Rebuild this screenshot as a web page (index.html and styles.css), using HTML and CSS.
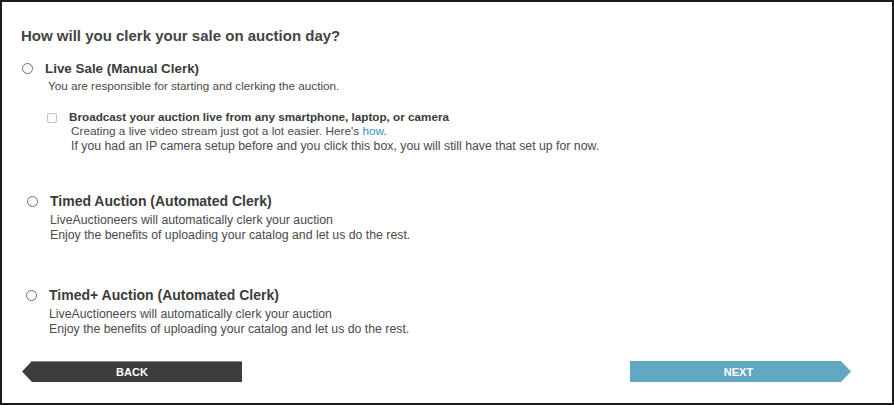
FILE: index.html
```html
<!DOCTYPE html>
<html lang="en">
<head>
  <meta charset="UTF-8" />
  <title>Auction Setup - Clerking</title>
  <meta name="viewport" content="width=device-width, initial-scale=1.0" />
  <link rel="stylesheet" href="styles.css">
</head>
<body>
  <div class="frame">
    <div class="wizard">
      <h1>How will you clerk your sale on auction day?</h1>

      <div class="option">
        <label class="option-title"><input type="radio" name="clerk" value="live"> Live Sale (Manual Clerk)</label>
        <p class="option-desc">You are responsible for starting and clerking the auction.</p>

        <div class="sub-option">
          <label class="sub-title"><input type="checkbox" name="broadcast"> Broadcast your auction live from any smartphone, laptop, or camera</label>
          <p class="sub-desc">
            Creating a live video stream just got a lot easier. Here's <a href="#">how</a>.<br>
            <span class="sub-note">If you had an IP camera setup before and you click this box, you will still have that set up for now.</span>
          </p>
        </div>
      </div>

      <div class="option option-timed">
        <label class="option-title"><input type="radio" name="clerk" value="timed"> Timed Auction (Automated Clerk)</label>
        <p class="option-desc">
          LiveAuctioneers will automatically clerk your auction<br>
          Enjoy the benefits of uploading your catalog and let us do the rest.
        </p>
      </div>

      <div class="option option-timed option-plus">
        <label class="option-title"><input type="radio" name="clerk" value="timedplus"> Timed+ Auction (Automated Clerk)</label>
        <p class="option-desc">
          LiveAuctioneers will automatically clerk your auction<br>
          Enjoy the benefits of uploading your catalog and let us do the rest.
        </p>
      </div>

      <div class="nav">
        <button class="btn btn-back">BACK</button>
        <button class="btn btn-next">NEXT</button>
      </div>
    </div>
  </div>
</body>
</html>
```

FILE: styles.css
```css
body {
  margin: 0;
  padding: 0;
  background: #ffffff;
  font-family: "Liberation Sans", Arial, sans-serif;
  color: #444;
}
.frame {
  width: 890px;
  height: 401px;
  border: 2px solid #1a1a1a;
  overflow: hidden;
}
.wizard {
  padding: 25px 41px 0 20px;
}
h1 {
  font-size: 15px;
  line-height: 18px;
  font-weight: bold;
  color: #444;
  margin: 0 0 15px -1px;
}
.option-title {
  display: flex;
  align-items: center;
  gap: 12px;
  font-size: 13.4px;
  line-height: 17px;
  font-weight: bold;
  color: #3b3b3b;
}
.option-title input {
  appearance: none;
  width: 11px;
  height: 11px;
  margin: 0;
  border: 1px solid #6f6f6f;
  border-radius: 50%;
  background: #fff;
  flex: none;
}
.option-desc {
  margin: 1px 0 0 26px;
  font-size: 11.7px;
  line-height: 15px;
  color: #4a4a4a;
}
.sub-option {
  margin: 16px 0 0 25px;
}
.sub-title {
  display: flex;
  align-items: center;
  gap: 12px;
  font-size: 11.7px;
  line-height: 15px;
  font-weight: bold;
  color: #3b3b3b;
}
.sub-title input {
  appearance: none;
  width: 10px;
  height: 10px;
  margin: 2px 0 0 0;
  border: 1px solid #c4c4c4;
  border-radius: 2px;
  background: #fafafa;
  flex: none;
}
.sub-desc {
  margin: 0 0 0 24px;
  font-size: 11.8px;
  line-height: 15px;
  color: #4a4a4a;
}
.sub-note {
  font-size: 12.3px;
}
.sub-desc a {
  color: #3d8fba;
  text-decoration: none;
}
.option-timed {
  margin: 39px 0 0 5px;
}
.option-timed .option-title {
  font-size: 14px;
}
.option-timed .option-desc {
  margin: 3px 0 0 23px;
  font-size: 12.3px;
}
.option-plus {
  margin-top: 44px;
  margin-left: 4px;
}
.nav {
  display: flex;
  justify-content: space-between;
  margin-top: 24px;
}
.btn {
  height: 21px;
  border: none;
  padding: 0;
  color: #fff;
  font-family: "Liberation Sans", Arial, sans-serif;
  font-size: 11px;
  font-weight: bold;
  cursor: pointer;
}
.btn-back {
  width: 220px;
  background: #3d3d3d;
  box-shadow: inset 0 1px 0 #8a8a8a;
  clip-path: polygon(10px 0, 100% 0, 100% 100%, 10px 100%, 0 50%);
}
.btn-next {
  width: 221px;
  background: #63a8c3;
  padding-right: 4px;
  clip-path: polygon(0 0, calc(100% - 10px) 0, 100% 50%, calc(100% - 10px) 100%, 0 100%);
}
```
